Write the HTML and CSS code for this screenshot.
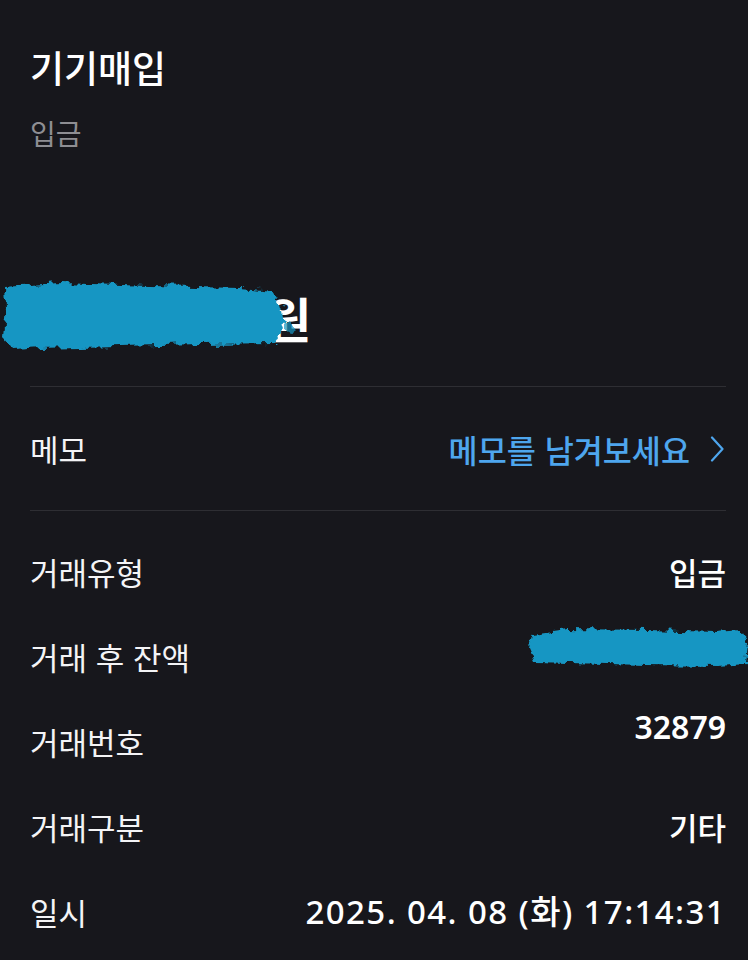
FILE: index.html
```html
<!DOCTYPE html>
<html lang="ko">
<head>
<meta charset="utf-8">
<title>기기매입</title>
<link rel="stylesheet" href="styles.css">
</head>
<body>
<main class="page">
  <header class="head">
    <h1 class="title">기기매입</h1>
    <p class="subtitle">입금</p>
    <div class="amount">
      <svg class="smear smear-lg" width="305" height="80" viewBox="0 0 305 80" aria-hidden="true">
        <defs>
          <filter id="rough1" x="-10%" y="-30%" width="120%" height="160%">
            <feTurbulence type="fractalNoise" baseFrequency="0.09" numOctaves="3" seed="4" result="n"/>
            <feDisplacementMap in="SourceGraphic" in2="n" scale="12" xChannelSelector="R" yChannelSelector="G"/>
          </filter>
        </defs>
        <path filter="url(#rough1)" fill="#1896c3" d="M4,10 L60,6 L150,9 L240,11 L272,14 L282,30 L286,52 L276,66 L200,67 L120,69 L40,71 L12,73 L2,60 L5,32 Z"/>
        <circle filter="url(#rough1)" cx="290" cy="50" r="5" fill="#1896c3" opacity="0.7"/>
      </svg>
      <span class="amount-unit">원</span>
    </div>
  </header>

  <section class="memo">
    <span class="label">메모</span>
    <span class="memo-link">메모를 남겨보세요
      <svg class="chev" width="14" height="26" viewBox="0 0 14 26" aria-hidden="true"><path d="M2,1.5 L12.5,13 L2,24.5" fill="none" stroke="#4ea6ee" stroke-width="2.2" stroke-linecap="round" stroke-linejoin="round"/></svg>
    </span>
  </section>

  <section class="details">
    <div class="row">
      <span class="label">거래유형</span>
      <span class="value">입금</span>
    </div>
    <div class="row">
      <span class="label">거래 후 잔액</span>
      <span class="value value-smeared">
        <svg class="smear smear-sm" width="223" height="54" viewBox="0 0 223 54" aria-hidden="true">
          <defs>
            <filter id="rough2" x="-10%" y="-30%" width="120%" height="160%">
              <feTurbulence type="fractalNoise" baseFrequency="0.1" numOctaves="3" seed="9" result="n"/>
              <feDisplacementMap in="SourceGraphic" in2="n" scale="10" xChannelSelector="R" yChannelSelector="G"/>
            </filter>
          </defs>
          <path filter="url(#rough2)" fill="#1896c3" d="M6,14 L40,9 L120,10 L190,12 L214,10 L221,24 L219,44 L190,46 L120,45 L40,43 L8,42 L2,28 Z"/>
        </svg>
        <span class="unit-sm">원</span>
      </span>
    </div>
    <div class="row">
      <span class="label">거래번호</span>
      <span class="value value-raised">32879</span>
    </div>
    <div class="row">
      <span class="label">거래구분</span>
      <span class="value">기타</span>
    </div>
    <div class="row">
      <span class="label">일시</span>
      <span class="value value-date">2025. 04. 08 (화) 17:14:31</span>
    </div>
  </section>
</main>
</body>
</html>
```
FILE: styles.css
```css
* { box-sizing: border-box; }
html, body {
  margin: 0;
  padding: 0;
  background: #17171c;
}
body {
  font-family: "Noto Sans CJK KR", "Noto Sans", sans-serif;
  color: #f4f4f6;
  width: 748px;
  height: 960px;
  overflow: hidden;
}
.page {
  padding: 0 22px 0 30px;
}
.head {
  padding-top: 44px;
  border-bottom: 1px solid #2e2e33;
}
.title {
  margin: 0;
  font-size: 37px;
  line-height: 46px;
  font-weight: 500;
  color: #ffffff;
}
.subtitle {
  margin: 24px 0 0;
  font-size: 28px;
  line-height: 38px;
  font-weight: 400;
  color: #8e8e93;
}
.amount {
  display: flex;
  align-items: center;
  margin: 125px 0 29px -30px;
  height: 80px;
}
.smear {
  display: block;
  position: relative;
  z-index: 1;
  flex: none;
}
.amount-unit {
  font-size: 48px;
  font-weight: 700;
  line-height: 60px;
  margin-left: -38px;
  color: #ffffff;
}
.memo {
  display: flex;
  justify-content: space-between;
  align-items: center;
  height: 124px;
  border-bottom: 1px solid #2e2e33;
}
.label {
  font-size: 31px;
  line-height: 40px;
  font-weight: 400;
  color: #f4f4f6;
}
.memo-link {
  display: flex;
  align-items: center;
  gap: 20px;
  font-size: 31.6px;
  line-height: 40px;
  font-weight: 500;
  color: #4ea6ee;
  margin-right: 2px;
}
.chev { display: block; }
.details {
  padding-top: 18px;
}
.row {
  display: flex;
  justify-content: space-between;
  align-items: center;
  height: 85px;
}
.value {
  font-size: 31px;
  line-height: 40px;
  font-weight: 500;
  color: #ffffff;
  text-align: right;
}
.value-smeared {
  display: flex;
  align-items: center;
  margin-right: -22px;
  padding-bottom: 20px;
}
.unit-sm {
  font-size: 30px;
  font-weight: 700;
  margin-left: -54px;
  margin-right: 24px;
  color: #ffffff;
}
.value-raised {
  padding-bottom: 30px;
  font-family: "Noto Sans", "Noto Sans CJK KR", sans-serif;
  font-size: 32px;
  font-weight: 600;
}
.value-date {
  font-family: "Noto Sans", "Noto Sans CJK KR", sans-serif;
  font-size: 33px;
  font-weight: 500;
  letter-spacing: 1.4px;
}
```
